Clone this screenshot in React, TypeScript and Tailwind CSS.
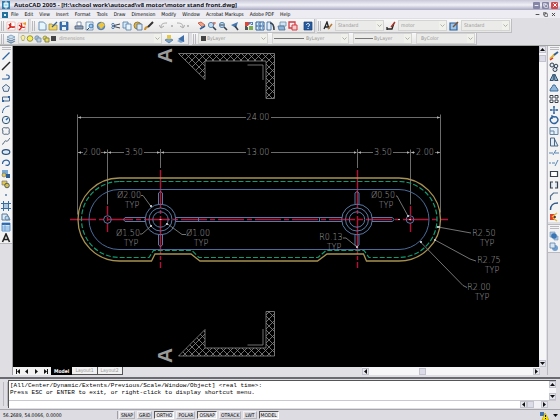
import type { ReactNode } from "react";
import { Minus, Copy, X } from "lucide-react";

type Tool = [label: string, icon: ReactNode];

const UI_FONT = "font-['DejaVu_Sans_Condensed','DejaVu_Sans',sans-serif]";

const menus = [
  "File", "Edit", "View", "Insert", "Format", "Tools", "Draw",
  "Dimension", "Modify", "Window", "Acrobat Markups", "Adobe PDF", "Help",
];

const B = "#2c62a0";
const D = "#38424e";

const lens = (
  <>
    <circle cx="4" cy="4" r="2.6" fill="#bfdcf2" stroke="#5d86ad" />
    <path d="M6 6l3 3" stroke={D} strokeWidth="1.6" />
  </>
);

const pdfTools: Tool[] = [
  ["Convert to PDF", <><path d="M1 1h8v8H1z" fill="#fff" stroke="#e7a3a0" strokeWidth=".6" /><path d="M2 8c3-2 3-5 2.500-6M3 3c1 3 3 4 6 3M2 8c1-2 4-2.500 7-2" stroke="#d3231c" strokeWidth="1.300" /></>],
  ["Convert and email PDF", <><path d="M1 2h7v7H1z" fill="#fff" stroke="#e7a3a0" strokeWidth=".6" /><path d="M2 9c3-2 3-5 2-7M2 4c2 2 4 3 6 2" stroke="#d3231c" strokeWidth="1.300" /><path d="M5 3l4-2v3z" fill="#f0961e" /></>],
];

const fileTools: Tool[] = [
  ["New", <path d="M2 1h4.500L9 3.500V9H2z" fill="#e6f4fc" stroke="#6a92b8" />],
  ["Open", <><path d="M1 3h3l1 1h4v5H1z" fill="#f1d564" stroke="#9a8434" strokeWidth=".7" /><path d="M4 6l5-5" stroke={B} strokeWidth="1.300" /></>],
  ["Save", <><path d="M1 1h8v8H1z" fill="#3d73b5" stroke="#2a548a" strokeWidth=".7" /><path d="M3 1h4v3H3zM3 6h4v3H3z" fill="#e8f0f8" /></>],
];

const printTools: Tool[] = [
  ["Plot", <><path d="M3 1h4v4H3z" fill="#fff" stroke="#6682a0" strokeWidth=".8" /><path d="M1 5h8v3H1z" fill="#8ea1b8" stroke="#4c607a" strokeWidth=".8" /></>],
  ["Plot Preview", <><path d="M1 1h7v8H1z" fill="#e8f4fc" stroke="#5d86ad" strokeWidth=".8" /><circle cx="6" cy="5" r="2" fill="#9dc8ea" stroke={B} strokeWidth=".8" /><path d="M4 7l-2 2" stroke={D} /></>],
  ["Publish", <><circle cx="5" cy="5" r="3.800" fill="#6f9bc8" stroke="#365f8e" strokeWidth=".7" /><path d="M2 4l4-3 3 3-4 4z" fill="#efc63c" /></>],
];

const clipTools: Tool[] = [
  ["Cut", <><path d="M3 4.500l6-1.500M3 5.500l6 1.500" stroke={D} /><circle cx="2" cy="3.500" r="1.200" stroke={B} strokeWidth=".8" /><circle cx="2" cy="6.500" r="1.200" stroke={B} strokeWidth=".8" /></>],
  ["Copy", <><path d="M1 1h5v6H1z" fill="#d6eaf8" stroke="#527ba6" strokeWidth=".8" /><path d="M4 3h5v6H4z" fill="#eaf5fc" stroke="#527ba6" strokeWidth=".8" /></>],
  ["Paste", <><circle cx="4.500" cy="4.500" r="3.500" fill="#dfb443" stroke="#7c6b3c" strokeWidth=".8" /><path d="M4 3h5v6H4z" fill="#dbeaf6" stroke="#4d719b" strokeWidth=".8" /></>],
  ["Match Properties", <><path d="M1 9c0-2 1-3 3-3" stroke="#c59339" strokeWidth="2" /><path d="M4 6l5-5" stroke="#333" strokeWidth="2" /></>],
];

const undoTool: Tool = ["Undo", <path d="M2 6c0-3 2-4 6-4M0 4l2 3 3-2" stroke="#aaa" />];
const redoTool: Tool = ["Redo", <path d="M8 6c0-3-2-4-6-4M10 4L8 7 5 5" stroke="#aaa" />];

const zoomTools: Tool[] = [
  ["Pan", <><path d="M2 2l5 5 2-3-4-3z" fill="#e8a388" stroke="#c04f3a" strokeWidth=".8" /><path d="M4 8l5-3" stroke={B} strokeWidth="1.500" /></>],
  ["Zoom Realtime", <>{lens}<path d="M7 1v3M6 2h3" stroke="#b84d3a" strokeWidth=".8" /></>],
  ["Zoom Window", <>{lens}<path d="M2 4h4" stroke={D} /></>],
  ["Zoom Previous", <><path d="M9 1L2 4l5 3z" fill="#4576ae" /><path d="M6 5l3 4" stroke={D} strokeWidth="1.500" /></>],
];

const paletteTools: Tool[] = [
  ["Properties", <><path d="M1 1h4v4H1z" fill="#d9483b" /><path d="M5 1h4v3H5z" fill="#4d7ec0" /><path d="M1 5h3v4H1z" fill="#555" /><path d="M5 5h4v4H5z" fill="#80ae58" /><path d="M3 6l5-4" stroke="#fff" /></>],
  ["DesignCenter", <><path d="M1 1h8v8H1z" fill="#dfeaf6" stroke={B} /><path d="M5 1v8M1 5h8M3 3h1M7 3h1M3 7h1M7 7h1" stroke={B} /></>],
  ["Tool Palettes", <><path d="M1 1h4v8H1z" fill="#e3edf6" stroke={B} strokeWidth=".8" /><path d="M4 2c3 0 4 3 4 7" stroke={D} strokeWidth="1.600" /></>],
  ["Sheet Set Manager", <><path d="M3 1h6v4H3z" fill="#d3e2ef" stroke="#6d8fae" strokeWidth=".8" /><path d="M1 5h6l1 4H2z" fill="#8fb3d4" stroke="#4a6d92" strokeWidth=".8" /></>],
  ["Markup Set Manager", <><path d="M1 1h6v6H1z" stroke="#d43a40" strokeWidth="1.300" /><path d="M4 4h5v5H4z" fill="#f4cccc" stroke="#d43a40" /></>],
];

const helpTools: Tool[] = [
  ["Help", <><path d="M1 1h8v8H1z" fill="#275a9d" stroke="#1a4078" strokeWidth=".7" /><path d="M3.500 4c0-2 3-2 3 0 0 1-1.500 1-1.500 2M5 7v1" stroke="#fff" /></>],
];

const drawTools: Tool[] = [
  ["Line", <path d="M1.500 8.500l7-7" stroke={B} strokeWidth="1.200" />],
  ["Construction Line", <path d="M1 9l8-8" stroke="#222" strokeWidth="1.400" />],
  ["Polyline", <path d="M1 7h5c3 0 3-4 0-4H5" stroke={B} strokeWidth="1.200" />],
  ["Polygon", <path d="M5 1.500l3.500 2.700-1.300 4.100H2.800L1.500 4.200z" fill="#e4edf5" stroke="#4a6482" />],
  ["Rectangle", <><path d="M1.500 3h7v4h-7z" fill="#e4edf5" stroke="#4a6482" /><path d="M1 7h2M7 3h2" stroke={B} strokeWidth="2" /></>],
  ["Arc", <path d="M1.500 9c0-4 3-7 7-7" stroke={B} />],
  ["Circle", <><circle cx="5" cy="5" r="3.700" fill="#e6f0f8" stroke="#38536f" /><path d="M5 5l2-2" stroke={B} strokeWidth="1.500" /></>],
  ["Revision Cloud", <path d="M2 5c-2-3 1-4 3-3 3-1 4 1 3 3 1 3-1 4-3 3-2 1-4 0-3-3z" stroke="#4a5f78" />],
  ["Spline", <path d="M1 8c2 1 2-4 4-3s2-1 4-3" stroke="#4a5f78" />],
  ["Ellipse", <ellipse cx="5" cy="5" rx="3.800" ry="2.400" fill="#dcebf7" stroke="#2b4f7c" strokeWidth="1.200" />],
  ["Ellipse Arc", <path d="M1.500 6c0-5 7-5 7-1 0 2-2 3-4 2" stroke="#2b5f9c" strokeWidth="1.200" />],
  ["Insert Block", <><path d="M1 1h6v6H1z" fill="#7aa8d4" /><circle cx="3" cy="6" r="2" fill="#e2c84c" stroke="#667" strokeWidth=".6" /><path d="M5 5h4v4H5z" fill="#2f5d8f" /></>],
  ["Make Block", <><path d="M1 2h5v4H1z" fill="#e2c84c" stroke="#667" strokeWidth=".6" /><circle cx="6" cy="6.500" r="2.300" fill="#d5bf4a" stroke="#345" strokeWidth=".8" /></>],
  ["Point", <path d="M4.200 5h1.600" stroke={B} strokeWidth="1.600" />],
  ["Hatch", <><path d="M2 2h6v6H2z" fill="#a8c8e4" /><path d="M2.500 0v10M7.500 0v10M0 2.500h10M0 7.500h10" stroke="#3a6ca2" /></>],
  ["Region", <><path d="M1 2h5l3 6H1z" fill="#dcebf7" stroke="#54789c" /><circle cx="6" cy="6" r="2" fill="#b8d5ec" stroke="#54789c" strokeWidth=".8" /></>],
  ["Table", <><path d="M1 1h8v8H1z" fill="#d6e8f8" stroke="#5c94ce" /><path d="M1 2h8" stroke="#2f6ab0" strokeWidth="2" /><path d="M1 5h8M1 7h8M4 2v7" stroke="#5c94ce" strokeWidth=".7" /></>],
  ["Multiline Text", <path d="M1.500 9L5 1l3.500 8M3 6.500h4" stroke="#222" strokeWidth="1.600" />],
];

const modifyTools: Tool[] = [
  ["Erase", <><path d="M1 8l5-5" stroke="#e0b63c" strokeWidth="2.200" /><path d="M5 4l4-3" stroke="#345f95" strokeWidth="1.800" /><path d="M1 9l3-2" stroke="#d03a32" strokeWidth="1.500" /></>],
  ["Copy Object", <><circle cx="3" cy="3" r="2" fill="#dce9f4" stroke={D} /><circle cx="7" cy="4" r="1.800" fill="#dce9f4" stroke={D} /><circle cx="6" cy="7.500" r="2" fill="#dce9f4" stroke={D} /></>],
  ["Mirror", <path d="M4.300 2L1 8.500h3.300zM5.700 2L9 8.500H5.700z" fill="#8fb8da" stroke="#34506e" />],
  ["Offset", <path d="M1 8c0-3 2-3 3-6h2c1 3 3 3 3 6z" fill="#8fb8da" stroke="#3d6c9c" />],
  ["Array", <path d="M1 1.500h3v2.500H1zM6 1.500h3v2.500H6zM1 6h3v2.500H1zM6 6h3v2.500H6z" fill="#fff" stroke={D} />],
  ["Move", <path d="M5 1v8M1 5h8M4 2h2M4 8h2M2 4v2M8 4v2" stroke={B} strokeWidth="1.200" />],
  ["Rotate", <path d="M3 2c-4 3 0 8 4 6 4-3 1-7-2-6L3 1v3" stroke={B} strokeWidth="1.400" />],
  ["Scale", <path d="M1 1.500h8v7H1zM1 5h4v3.500" fill="#e4f0f8" stroke="#6685a4" />],
  ["Stretch", <path d="M1.500 1h4v8h-4zM5.500 2L9 9H5.500" fill="#e2edf6" stroke="#4a6684" />],
  ["Trim", <path d="M0 5h4M6 5h4M4 7l3-5" stroke="#5583b4" />],
  ["Extend", <path d="M0 5h2M3 5h3M6 8l3-6" stroke="#5583b4" />],
  ["Break at Point", <path d="M1.500 2.500h7v5h-7z" fill="#fff" stroke={D} strokeWidth="1.200" />],
  ["Break", <path d="M4 2H1.500v6H4M6 2h2.500v6H6" fill="#dce9f4" stroke={D} strokeWidth="1.200" />],
  ["Chamfer", <path d="M1.500 9V5l3-3H9" stroke="#55718f" strokeWidth="1.200" />],
  ["Fillet", <path d="M1.500 9c0-5 2-7 7.500-7" stroke="#2f5888" strokeWidth="1.400" />],
  ["Explode", <><path d="M1 2h5v6H1z" fill="#d83e2e" /><path d="M3 5l5-4M4 6l4 3" stroke="#e9ba3f" strokeWidth="1.500" /><path d="M5 5h2" stroke="#333" strokeWidth="1.500" /></>],
];

const orderTools: Tool[] = [
  ["Bring to Front", <><path d="M1 1h5v5H1zM5 5h4v4H5z" fill="#aac6e0" stroke="#7395b8" strokeWidth=".6" /><circle cx="5" cy="5" r="2.800" fill="#3c76b4" /></>],
  ["Send to Back", <><circle cx="6" cy="6" r="3" fill="#6fa0d0" /><path d="M1 1h5v5H1z" fill="#d8e6f2" stroke="#5b80a8" strokeWidth=".8" /></>],
];

const layerStack: Tool = ["Layer Properties Manager", <><path d="M5 1l4 2-4 2-4-2z" fill="#c9dff0" stroke="#6488aa" strokeWidth=".7" /><path d="M1 5l4 2 4-2M1 7l4 2 4-2" stroke="#6488aa" strokeWidth="1.200" /></>];
const makeCurrent: Tool = ["Make Object's Layer Current", <><path d="M1 6l4-2 4 2-4 3z" fill="#7aa3cc" stroke="#496f98" strokeWidth=".7" /><path d="M3 1h4v4H3z" fill="#e5c845" /></>];
const layerPrevious: Tool = ["Layer Previous", <><path d="M1 7l4-2 4 2-4 2z" fill="#7aa3cc" /><path d="M8 1L2 5l6 3z" fill="#3d6ea8" /></>];
const textStyle: Tool = ["Text Style Manager", <><path d="M1 8l3-7 2 7M2 6h4" stroke="#222" strokeWidth="1.300" /><path d="M5 8l4-5" stroke="#b37a35" strokeWidth="1.500" /></>];
const dimStyle: Tool = ["Dimension Style Manager", <><path d="M1 8h5l2-6M1 6v3" stroke="#222" strokeWidth="1.300" /><path d="M5 6l4-5" stroke="#b3352a" strokeWidth="1.300" /></>];
const tableStyle: Tool = ["Table Style Manager", <><path d="M1 2h7v7H1z" fill="#9cc4e6" stroke="#2a5f9e" strokeWidth="1.200" /><path d="M4 6l5-5" stroke="#7a5335" strokeWidth="1.400" /></>];

function Glyph({ children }: { children: ReactNode }) {
  return (
    <svg viewBox="0 0 10 10" fill="none" className="block size-[10px]" aria-hidden="true">
      {children}
    </svg>
  );
}

function ToolButton({ tool }: { tool: Tool }) {
  return (
    <button type="button" aria-label={tool[0]} className="size-[10px] shrink-0">
      <Glyph>{tool[1]}</Glyph>
    </button>
  );
}

function ToolGroup({ tools }: { tools: Tool[] }) {
  return (
    <div className="flex shrink-0 items-center gap-px">
      {tools.map((tool) => (
        <ToolButton key={tool[0]} tool={tool} />
      ))}
    </div>
  );
}

function Grip() {
  return <div className="mr-0.5 h-[10px] w-[3px] shrink-0 border-x border-[#b9b9bf]" />;
}

function ToolPanel({ children }: { children: ReactNode }) {
  return (
    <div className="flex h-full shrink-0 items-center border-r border-b border-[#bdbdc2] bg-linear-to-b from-[#f8f8f8] to-[#e6e6e6] px-px">
      {children}
    </div>
  );
}

function Combo({
  label,
  value,
  className,
  padding = "pl-0.5",
  children,
}: {
  label: string;
  value: string;
  className: string;
  padding?: string;
  children?: ReactNode;
}) {
  return (
    <div className={`relative flex h-[11px] shrink-0 items-center border border-[#d4d4d2] bg-[#ebebe9] ${className}`}>
      <select
        aria-label={label}
        className={`h-full w-full appearance-none bg-transparent text-[5px] leading-[9px] text-[#989896] outline-none ${padding}`}
      >
        <option>{value}</option>
      </select>
      {children}
      <svg viewBox="0 0 7 9" fill="none" className="pointer-events-none absolute right-0 h-[9px] w-[7px] bg-[#f1f1ec]" aria-hidden="true">
        <path d="M1.500 3.500l2 2 2-2" stroke="#b0b0a8" />
      </svg>
    </div>
  );
}

function ScrollButton({ label, d }: { label: string; d: string }) {
  return (
    <button type="button" aria-label={label} className="size-[7px] shrink-0 border border-[#c3c3ce] bg-[#e6e6ee]">
      <svg viewBox="0 0 5 5" className="block size-full" aria-hidden="true">
        <path d={d} fill="#111" />
      </svg>
    </button>
  );
}

const UP = "M2.500 1L5 4H0z";
const DOWN = "M2.500 4L5 1H0z";
const LEFT = "M1 2.500L4 0v5z";
const RIGHT = "M4 2.500L1 0v5z";

function WindowHeader() {
  return (
    <header>
      <div className="flex h-[10px] items-center bg-linear-to-b from-[#c9c9da] via-[#f0f0f6] to-[#a9a9c2] pr-0.5 pl-[2px]">
        <svg viewBox="0 0 8 8" className="mr-1 size-2 shrink-0" aria-hidden="true">
          <path d="M0 0h8v8H0z" fill="#2a7fae" />
          <path d="M2 2h4v4H2zM4 0v3M4 5v3" fill="#a8dbee" stroke="#fff" strokeWidth=".8" />
        </svg>
        <h1 className="flex-1 truncate font-['Noto_Sans','Liberation_Sans',sans-serif] text-[6px] leading-[10px] font-bold text-[#101018]">
          AutoCAD 2005 - [H:\school work\autocad\v8 motor\motor stand front.dwg]
        </h1>
        <div className="flex gap-[2px]">
          <button type="button" aria-label="Minimize" className="grid size-[7px] place-items-center rounded-[1px] bg-[#8585a8] text-white">
            <Minus size={5} strokeWidth={4} />
          </button>
          <button type="button" aria-label="Restore" className="grid size-[7px] place-items-center rounded-[1px] bg-[#8585a8] text-white">
            <Copy size={5} strokeWidth={3} />
          </button>
          <button type="button" aria-label="Close" className="grid size-[7px] place-items-center rounded-[1px] bg-[#cf4a4a] text-white">
            <X size={6} strokeWidth={4} />
          </button>
        </div>
      </div>
      <nav className="flex h-2 items-center bg-[#ececf2] pr-1 pl-[2px] text-[5px] leading-[8px] text-black">
        <svg viewBox="0 0 7 7" className="mr-[2px] size-[7px] shrink-0" aria-hidden="true">
          <path d="M0 1h6v6H0z" fill="#24709c" />
          <path d="M2 3h2v2H2z" fill="#d9f0fa" />
        </svg>
        <ul className="flex flex-1 gap-[6px]">
          {menus.map((menu) => (
            <li key={menu}>
              <button type="button" className="block whitespace-nowrap">{menu}</button>
            </li>
          ))}
        </ul>
        <div className="flex gap-[3px] text-[#333]">
          <button type="button" aria-label="Minimize drawing"><Minus size={5} strokeWidth={4} /></button>
          <button type="button" aria-label="Restore drawing"><Copy size={5} strokeWidth={3} /></button>
          <button type="button" aria-label="Close drawing"><X size={5} strokeWidth={4} /></button>
        </div>
      </nav>
    </header>
  );
}

function StandardToolbar() {
  return (
    <div className="flex h-[15px] gap-[2px] overflow-hidden pt-px">
      <ToolPanel>
        <Grip />
        <ToolGroup tools={pdfTools} />
      </ToolPanel>
      <ToolPanel>
        <Grip />
        <div className="flex items-center gap-[5px]">
          <ToolGroup tools={fileTools} />
          <ToolGroup tools={printTools} />
          <ToolGroup tools={clipTools} />
          <div className="flex items-center gap-[2px] pr-0.5">
            <ToolButton tool={undoTool} />
            <span className="size-[2px] bg-[#bbb]" />
            <ToolButton tool={redoTool} />
            <span className="size-[2px] bg-[#bbb]" />
          </div>
          <ToolGroup tools={zoomTools} />
          <ToolGroup tools={paletteTools} />
          <ToolGroup tools={helpTools} />
        </div>
      </ToolPanel>
      <ToolPanel>
        <Grip />
        <div className="flex items-center gap-[2px]">
          <ToolButton tool={textStyle} />
          <Combo label="Text style" value="Standard" className="w-[49px]" />
          <ToolButton tool={dimStyle} />
          <Combo label="Dimension style" value="motor" className="w-[49px]" />
          <ToolButton tool={tableStyle} />
          <Combo label="Table style" value="Standard" className="w-[49px]" />
        </div>
      </ToolPanel>
    </div>
  );
}

function LayerToolbar() {
  return (
    <div className="flex h-[13px] gap-[3px] overflow-hidden border-b border-[#a2a6a2]">
      <ToolPanel>
        <Grip />
        <ToolButton tool={layerStack} />
        <Combo label="Layer" value="dimensions" className="ml-[2px] w-[144px]" padding="pl-[40px]">
          <svg viewBox="0 0 38 9" fill="none" className="pointer-events-none absolute left-0 h-[9px] w-[38px]" aria-hidden="true">
            <path d="M3 1.500c-2 2 0 3 0 5h2c0-2 2-3 0-5z" fill="#f5efaa" stroke="#a09a50" strokeWidth=".7" />
            <circle cx="11" cy="4.500" r="2.800" fill="#f6ee58" stroke="#9a9440" />
            <circle cx="18" cy="4" r="2.200" fill="#a9c1d6" stroke="#6e8aa5" strokeWidth=".8" />
            <path d="M18 4h4v4h-4z" fill="#bcd0e0" stroke="#6e8aa5" strokeWidth=".8" />
            <circle cx="26" cy="4" r="2" fill="#e4dc60" stroke="#8b8642" strokeWidth=".8" />
            <path d="M26 4h4v4h-4z" fill="#e4dc60" stroke="#77723a" strokeWidth=".8" />
            <path d="M32 2h5v5h-5z" fill="#444" />
          </svg>
        </Combo>
        <div className="ml-0.5 flex gap-[2px] pr-px">
          <ToolButton tool={makeCurrent} />
          <ToolButton tool={layerPrevious} />
        </div>
      </ToolPanel>
      <ToolPanel>
        <Grip />
        <div className="flex items-center gap-1">
          <Combo label="Color" value="ByLayer" className="w-[70px]" padding="pl-[8px]">
            <span className="pointer-events-none absolute left-[2px] size-[5px] bg-[#444]" />
          </Combo>
          <Combo label="Linetype" value="ByLayer" className="w-[77px]" padding="pl-[33px]">
            <span className="pointer-events-none absolute left-px h-px w-[30px] bg-[#777]" />
          </Combo>
          <Combo label="Lineweight" value="ByLayer" className="w-[59px]" padding="pl-[20px]">
            <span className="pointer-events-none absolute left-px h-px w-[18px] bg-[#777]" />
          </Combo>
          <Combo label="Plot style" value="ByColor" className="w-[59px]" padding="pl-[4px]" />
        </div>
      </ToolPanel>
    </div>
  );
}

const dimensionTexts: [x: number, y: number, text: string][] = [
  [258, 120, "24.00"], [92, 155, "2.00"], [134, 155, "3.50"], [258, 155, "13.00"],
  [383, 155, "3.50"], [425, 155, "2.00"],
];

const notes: [x: number, y: number, text: string][] = [
  [129, 198, "Ø2.00"], [128, 236, "Ø1.50"], [198, 236, "Ø1.00"], [383, 198, "Ø0.50"],
  [331, 240, "R0.13"], [484, 236, "R2.50"], [489, 263, "R2.75"], [479, 290, "R2.00"],
];

const dimensionLines: [x1: number, x2: number, y: number][] = [
  [78, 246, 117], [271, 440, 117],
  [78, 83, 152], [101, 107, 152], [108, 124, 152], [144, 160, 152],
  [161, 246, 152], [271, 356, 152], [357, 373, 152], [393, 409, 152],
  [410, 415, 152], [435, 440, 152],
];

const arrowHeads: [x: number, y: number, dir: 1 | -1][] = [
  [78, 117, 1], [440, 117, -1], [78, 152, 1], [107, 152, -1], [108, 152, 1], [160, 152, -1],
  [161, 152, 1], [357, 152, -1], [358, 152, 1], [410, 152, -1], [411, 152, 1], [440, 152, -1],
];

function Boss({ cx }: { cx: number }) {
  return (
    <g stroke="#587aa6">
      <path d={`M${cx - 2} 204v-11q2-3 4 0v11M${cx - 2} 235v10q2 3 4 0v-10`} />
      <circle cx={cx} cy="219.500" r="15.300" />
      <circle cx={cx} cy="219.500" r="11.500" />
      <circle cx={cx} cy="219.500" r="7.700" />
    </g>
  );
}

function Drawing() {
  return (
    <svg
      viewBox="13 46 526 321"
      fill="none"
      role="img"
      aria-label="Motor stand front view"
      className="block h-full w-full"
    >
      <defs>
        <pattern id="hatch" width="7" height="7" patternUnits="userSpaceOnUse" x="3" y="4">
          <path d="M0 0l7 7M7 0L0 7" stroke="#8a8a8a" strokeWidth=".8" />
        </pattern>
      </defs>

      {/* section markers */}
      <g stroke="#8c8c8c" strokeWidth=".8">
        <path d="M178.500 53.500h96v45h-8.500V61h-61v18.500z" fill="url(#hatch)" />
        <path d="M178.500 356h96v-44.500h-8.500V348h-61v-18.500z" fill="url(#hatch)" />
        <path d="M247.500 65H263v15M247.500 345H263v-16" />
      </g>
      <g fill="#999" className="font-['Liberation_Sans',sans-serif] text-[21px] font-bold" textAnchor="middle">
        <text transform="translate(172 55.500) rotate(-90)">A</text>
        <text transform="translate(172 355.500) rotate(-90)">A</text>
      </g>

      {/* dimensions */}
      <g stroke="#6c6c6c">
        <path d="M77.500 114.500v100M440.500 114.500v98M107.500 149.500v55M410.500 149.500v55M160.500 149v19M357.500 149v19" />
        {dimensionLines.map(([x1, x2, y]) => (
          <path key={`${x1}-${y}`} d={`M${x1} ${y}.500H${x2}`} />
        ))}
      </g>
      <g fill="#b5b5b5">
        {arrowHeads.map(([x, y, dir]) => (
          <path key={`${x}-${y}-${dir}`} d={`M${x} ${y + 0.5}l${3 * dir} -1.300v2.600z`} />
        ))}
      </g>

      {/* centre lines */}
      <g stroke="#b81038" strokeWidth="1.400">
        <path d="M70 219.500h378" strokeDasharray="26 3 5 3" />
        <path d="M160.500 170v98M357.500 170v98" strokeDasharray="38 2 4 2" />
        <path d="M107.500 206v26M410.500 206v26" strokeDasharray="9 2 4 2" />
      </g>

      {/* stand outline */}
      <path
        d="M119.500 178H399c23 0 41.500 18.500 41.500 41.500S422 261 399 261h-32.500l-3-7H327l-9.500 7H200l-9-7h-36l-3.500 7h-32C96.500 261 78 242.500 78 219.500S96.500 178 119.500 178z"
        stroke="#a89250"
        strokeWidth="1.300"
      />
      <path
        d="M119.500 181.500H399c21 0 38 17 38 38s-17 38-38 38h-30l-5-7h-38l-8 7H199l-7-7h-38.500l-4.500 7h-29.500c-21 0-38-17-38-38s17-38 38-38z"
        stroke="#129a70"
        strokeWidth="1.200"
        strokeDasharray="5 2"
      />
      <rect x="89" y="189.500" width="340" height="60" rx="30" stroke="#4a6c9a" />
      <Boss cx={160.5} />
      <Boss cx={357} />
      <g stroke="#587aa6">
        <path d="M145 217.500h-20q-3 2 0 4h20M176 217.500h166M176 221.500h166M198.500 217v5M319.500 217v5M372 217.500h20q4 2 0 4h-20" />
        <circle cx="107.500" cy="219.500" r="3.800" />
        <circle cx="410" cy="219.500" r="3.800" />
      </g>
      <path d="M398 219.500h2M159.500 219.500h2M409 219.500h2" stroke="#bbb" />

      {/* leaders */}
      <g stroke="#808080" strokeWidth=".9">
        <path d="M141 195.500h2l8 11M140 234h2l9-8M186 234.500h-4l-15-11M396 196h1l11 20M343 238h3l11 9M471 233l-33-6M476 261l-6-2-35-19M467 287.500l-4-2-43-44" />
      </g>
      <path d="M150 205h2v2h-2zM150 225h2v2h-2zM166 223h2v2h-2zM407 215h2v2h-2zM356 246h2v2h-2zM437 226h3v2h-3zM434 239h2v2h-2zM420 241h2v2h-2z" fill="#bbb" />
      <g fill="#a3a3a3" className="font-['DejaVu_Sans_Light','DejaVu_Sans',sans-serif] text-[8px] font-extralight" textAnchor="middle">
        {dimensionTexts.map(([x, y, text]) => (
          <text key={`${x}-${y}`} x={x} y={y}>{text}</text>
        ))}
        {notes.map(([x, y, text]) => (
          <text key={text} x={x} y={y}>
            {text}
            <tspan x={x + 3} dy="10">TYP</tspan>
          </text>
        ))}
      </g>
    </svg>
  );
}

function LayoutTabs() {
  return (
    <div className="flex h-2 items-stretch bg-[#e1e1e5] text-[5px] leading-[8px]">
      <div className="flex w-[38px] shrink-0 items-center justify-around bg-[#f2f2f2]">
        {[
          ["First layout", "M1 0h1v5H1zM5 0v5L2 2.500z"],
          ["Previous layout", LEFT],
          ["Next layout", RIGHT],
          ["Last layout", "M4 0h1v5H4zM1 0v5l3-2.500z"],
        ].map(([label, d]) => (
          <button key={label} type="button" aria-label={label}>
            <svg viewBox="0 0 6 5" className="block h-[5px] w-[6px]" aria-hidden="true"><path d={d} fill="#111" /></svg>
          </button>
        ))}
      </div>
      <button type="button" className="bg-black px-[3px] font-bold text-white">Model</button>
      <button type="button" className="border-r border-b border-[#555] bg-[#f1f1f1] px-[3px] leading-[7px] text-[#999]">Layout1</button>
      <button type="button" className="border-r border-b border-[#555] bg-[#f1f1f1] px-[3px] leading-[7px] text-[#999]">Layout2</button>
      <div className="flex-1" />
      <div className="mr-[6px] flex w-1/3 items-center bg-[#f6f6f9]">
        <ScrollButton label="Scroll left" d={LEFT} />
        <div className="mr-auto ml-[50px] h-[7px] w-[7px] border border-[#c3c3ce] bg-[#dcdce8]" />
        <ScrollButton label="Scroll right" d={RIGHT} />
      </div>
    </div>
  );
}

function CommandWindow() {
  return (
    <section aria-label="Command line" className="mt-0.5 flex h-[32px] border-t-2 border-[#6a6a72] bg-[#dedee3] pt-px pr-1 pb-px">
      <div className="my-0.5 ml-[3px] w-[5px] shrink-0 border-x border-[#b9b9bf]" />
      <div className="flex min-w-0 flex-1 flex-col border-t border-l border-[#555] bg-white">
        <div className="flex flex-1">
          <p className="flex-1 pt-px pl-px font-['Liberation_Mono',monospace] text-[6px] leading-[7px] whitespace-pre text-black">
            {"[All/Center/Dynamic/Extents/Previous/Scale/Window/Object] <real time>:\nPress ESC or ENTER to exit, or right-click to display shortcut menu."}
          </p>
          <div className="flex flex-col justify-between bg-[#f6f6f9]">
            <ScrollButton label="Scroll history up" d={UP} />
            <ScrollButton label="Scroll history down" d={DOWN} />
          </div>
        </div>
        <div className="flex h-2 items-center border-t border-[#c9c9cf]">
          <input aria-label="Command" className="h-[7px] min-w-0 flex-1 font-['Liberation_Mono',monospace] text-[6px] outline-none" />
          <div className="flex w-[28px] items-center bg-[#f2f2f6]">
            <ScrollButton label="Scroll command left" d={LEFT} />
            <div className="h-[7px] w-[7px] border border-[#c3c3ce] bg-[#dcdce8]" />
            <div className="flex-1" />
            <ScrollButton label="Scroll command right" d={RIGHT} />
          </div>
          <div className="h-full w-[8px] bg-[#dedee3]" />
        </div>
      </div>
    </section>
  );
}

const modes: [label: string, on: boolean][] = [
  ["SNAP", false], ["GRID", false], ["ORTHO", true], ["POLAR", false],
  ["OSNAP", true], ["OTRACK", false], ["LWT", false], ["MODEL", true],
];

function StatusBar() {
  return (
    <footer className="flex h-[11px] items-center border-t border-[#a6a6ac] bg-[#dcdce2] pr-[2px] text-[5px] leading-[8px] text-black">
      <output className="h-2 w-[118px] shrink-0 border-r border-[#a0a0a6] pl-[3px]">56.2689, 54.0066, 0.0000</output>
      <div className="flex flex-1 gap-[2px] pl-px">
        {modes.map(([label, on]) => (
          <button
            key={label}
            type="button"
            aria-pressed={on}
            className={`h-2 border px-px ${on ? "border-t-[#555] border-r-white border-b-white border-l-[#555] bg-[#e8e8ec]" : "border-t-[#f2f2f4] border-r-[#b4b4ba] border-b-[#b4b4ba] border-l-[#f2f2f4]"}`}
          >
            <span className="block leading-[6px]">{label}</span>
          </button>
        ))}
      </div>
      <button type="button" aria-label="Communication Center">
        <svg viewBox="0 0 9 9" className="block size-[9px]" aria-hidden="true">
          <path d="M0 1h4v4H0z" fill="#4272ae" />
          <path d="M5 2l4 7H2z" fill="#ffe500" stroke="#a08c00" strokeWidth=".5" />
          <path d="M5 4h1v2H5zM5 7h1v1H5z" fill="#111" />
        </svg>
      </button>
      <button type="button" aria-label="Status bar menu" className="ml-1">
        <svg viewBox="0 0 5 5" className="block size-[5px]" aria-hidden="true"><path d={DOWN} fill="#111" /></svg>
      </button>
    </footer>
  );
}

export default function App() {
  return (
    <div className={`flex h-screen flex-col overflow-hidden bg-[#dedee3] ${UI_FONT}`}>
      <WindowHeader />
      <StandardToolbar />
      <LayerToolbar />
      <main className="flex min-h-0 flex-1">
        <aside aria-label="Draw" className="flex w-[13px] shrink-0 flex-col border-r border-[#9c9ca2]">
          <div className="flex h-[198px] flex-col items-center justify-between border-b border-[#b9b9bf] bg-[#f3f3f3] pt-px">
            <div className="h-[3px] w-[9px] border-y border-[#b9b9bf]" />
            {drawTools.map((tool) => (
              <ToolButton key={tool[0]} tool={tool} />
            ))}
          </div>
        </aside>
        <div className="flex min-w-0 flex-1 flex-col">
          <div className="flex min-h-0 flex-1">
            <div className="min-w-0 flex-1 bg-black">
              <Drawing />
            </div>
            <div className="flex w-[7px] shrink-0 flex-col bg-[#f6f6f9]">
              <ScrollButton label="Scroll up" d={UP} />
              <div className="mt-[2px] h-[7px] border border-[#c3c3ce] bg-[#dcdce8]" />
              <div className="flex-1" />
              <ScrollButton label="Scroll down" d={DOWN} />
            </div>
          </div>
          <LayoutTabs />
        </div>
        <aside aria-label="Modify" className="ml-px flex w-[13px] shrink-0 flex-col border-l border-[#b9b9bf]">
          <div className="flex h-[176px] flex-col items-center justify-between bg-[#f3f3f3] pt-px">
            <div className="h-[3px] w-[9px] border-y border-[#b9b9bf]" />
            {modifyTools.map((tool) => (
              <ToolButton key={tool[0]} tool={tool} />
            ))}
          </div>
          <div className="mt-[2px] flex flex-col items-center gap-px border-t border-b border-[#b9b9bf] bg-[#f3f3f3] pt-px">
            <div className="mb-px h-[3px] w-[9px] border-y border-[#b9b9bf]" />
            {orderTools.map((tool) => (
              <ToolButton key={tool[0]} tool={tool} />
            ))}
          </div>
        </aside>
      </main>
      <CommandWindow />
      <StatusBar />
    </div>
  );
}
